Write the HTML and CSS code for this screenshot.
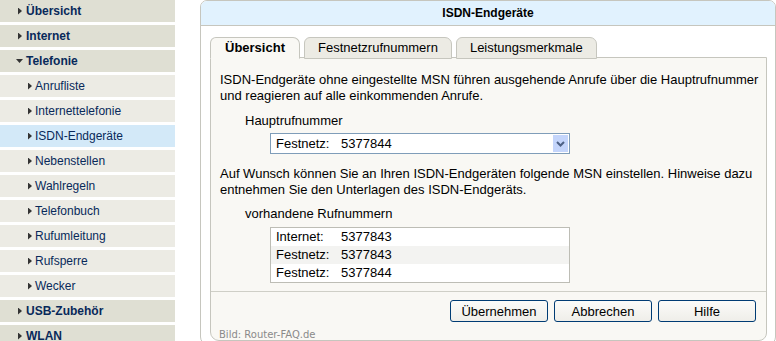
FILE: index.html
```html
<!DOCTYPE html>
<html lang="de">
<head>
    <meta charset="UTF-8">
    <title>ISDN-Endgeräte</title>
    <link rel="stylesheet" href="styles.css">
</head>
<body>
    <div class="page">
        <nav class="menu">
            <a class="menu-item top"><span class="arrow"></span>Übersicht</a>
            <a class="menu-item top"><span class="arrow"></span>Internet</a>
            <a class="menu-item top open"><span class="arrow down"></span>Telefonie</a>
            <a class="menu-item sub"><span class="arrow"></span>Anrufliste</a>
            <a class="menu-item sub"><span class="arrow"></span>Internettelefonie</a>
            <a class="menu-item sub active"><span class="arrow"></span>ISDN-Endgeräte</a>
            <a class="menu-item sub"><span class="arrow"></span>Nebenstellen</a>
            <a class="menu-item sub"><span class="arrow"></span>Wahlregeln</a>
            <a class="menu-item sub"><span class="arrow"></span>Telefonbuch</a>
            <a class="menu-item sub"><span class="arrow"></span>Rufumleitung</a>
            <a class="menu-item sub"><span class="arrow"></span>Rufsperre</a>
            <a class="menu-item sub"><span class="arrow"></span>Wecker</a>
            <a class="menu-item top"><span class="arrow"></span>USB-Zubehör</a>
            <a class="menu-item top"><span class="arrow"></span>WLAN</a>
        </nav>

        <div class="main">
            <div class="main-head">ISDN-Endgeräte</div>
            <div class="main-body">
                <div class="tabs">
                    <span class="tab active">Übersicht</span>
                    <span class="tab">Festnetzrufnummern</span>
                    <span class="tab">Leistungsmerkmale</span>
                </div>
                <div class="panel">
                    <div class="panel-content">
                        <p>ISDN-Endgeräte ohne eingestellte MSN führen ausgehende Anrufe über die Hauptrufnummer und reagieren auf alle einkommenden Anrufe.</p>

                        <div class="field-label first">Hauptrufnummer</div>
                        <div class="select">
                            <span class="num-label">Festnetz:</span><span>5377844</span>
                            <span class="select-btn">
                                <svg width="9" height="6" viewBox="0 0 9 6"><path d="M1 1 L4.5 4.5 L8 1" fill="none" stroke="#4d6185" stroke-width="2"/></svg>
                            </span>
                        </div>

                        <p class="second">Auf Wunsch können Sie an Ihren ISDN-Endgeräten folgende MSN einstellen. Hinweise dazu entnehmen Sie den Unterlagen des ISDN-Endgeräts.</p>

                        <div class="field-label">vorhandene Rufnummern</div>
                        <div class="list">
                            <div class="list-row"><span class="num-label">Internet:</span><span>5377843</span></div>
                            <div class="list-row alt"><span class="num-label">Festnetz:</span><span>5377843</span></div>
                            <div class="list-row"><span class="num-label">Festnetz:</span><span>5377844</span></div>
                        </div>
                    </div>
                    <div class="panel-buttons">
                        <button class="btn">Übernehmen</button>
                        <button class="btn">Abbrechen</button>
                        <button class="btn">Hilfe</button>
                    </div>
                    <div class="credit">Bild: Router-FAQ.de</div>
                </div>
            </div>
        </div>
    </div>
</body>
</html>
```

FILE: styles.css
```css
body {
    margin: 0;
    font-family: "Liberation Sans", Arial, sans-serif;
    font-size: 13px;
    color: #000;
    background-color: white;
    overflow: hidden;
}
.page {
    display: flex;
    align-items: flex-start;
    gap: 25px;
    height: 341px;
    overflow: hidden;
}

/* left menu */
.menu {
    width: 175px;
    display: flex;
    flex-direction: column;
    gap: 3px;
    flex-shrink: 0;
}
.menu-item {
    display: flex;
    align-items: center;
    height: 22px;
    color: #08295a;
    font-size: 12px;
    background-color: #ecebe4;
    padding-left: 28px;
    flex-shrink: 0;
}
.menu-item.top {
    background-color: #dfdfd3;
    font-weight: bold;
    padding-left: 18px;
}
.menu-item.active {
    background-color: #d3e9f8;
}
.arrow {
    width: 4px;
    height: 7px;
    background-color: #333;
    clip-path: polygon(0 0, 100% 50%, 0 100%);
    margin-right: 3px;
}
.menu-item.top .arrow {
    margin-right: 4px;
}
.menu-item.top .arrow.down {
    width: 7px;
    height: 4px;
    margin-left: -2px;
    margin-right: 3px;
    clip-path: polygon(0 0, 100% 0, 50% 100%);
}

/* main box */
.main {
    flex: 1;
    display: flex;
    flex-direction: column;
    border: 1px solid #c6c6be;
    border-radius: 7px 7px 8px 8px;
    overflow: hidden;
    height: 345px;
    flex-shrink: 0;
    box-sizing: border-box;
}
.main-head {
    height: 24px;
    line-height: 24px;
    background-color: #e1f2fe;
    border-bottom: 1px solid #c6c6be;
    text-align: center;
    font-weight: bold;
    font-size: 12px;
}
.main-body {
    flex: 1;
    display: flex;
    flex-direction: column;
    padding: 11px 8px 3px 9px;
}

.tabs {
    display: flex;
    gap: 4px;
    height: 21px;
}
.tab {
    height: 20px;
    line-height: 20px;
    padding: 0 13px;
    background-color: #ecebe4;
    border: 1px solid #c6c6be;
    border-radius: 6px 7px 0 0;
    position: relative;
    z-index: 1;
}
.tab.active {
    font-weight: bold;
    padding: 0 14px;
    background-color: #f9f8f4;
    border-bottom-color: #f9f8f4;
}

.panel {
    flex: 1;
    display: flex;
    flex-direction: column;
    position: relative;
    background-color: #f9f8f4;
    border: 1px solid #c6c6be;
    border-radius: 0 0 8px 9px;
    margin-top: -1px;
}
.panel-content {
    padding: 14px 0 8px 9px;
    line-height: 16px;
    border-bottom: 1px solid #cfcfc7;
}
.panel-content p {
    margin: 0;
}
.panel-content p.second {
    margin-top: 12px;
}
.field-label {
    margin: 8px 0 0 25px;
}
.field-label.first {
    margin-top: 9px;
}
.num-label {
    display: inline-block;
    width: 65px;
}
.select {
    display: flex;
    align-items: center;
    position: relative;
    margin: 4px 0 0 50px;
    width: 300px;
    height: 21px;
    box-sizing: border-box;
    border: 1px solid #7f9db9;
    background-color: white;
    padding-left: 5px;
}
.select-btn {
    position: absolute;
    right: 1px;
    top: 1px;
    width: 15px;
    height: 17px;
    background-color: #c4d5fb;
    display: flex;
    align-items: center;
    justify-content: center;
}
.list {
    margin: 5px 0 0 50px;
    width: 300px;
    height: 56px;
    box-sizing: border-box;
    border: 1px solid #bdbdb5;
    background-color: white;
}
.list-row {
    height: 18px;
    line-height: 18px;
    padding-left: 5px;
}
.list-row.alt {
    background-color: #f3f3f1;
}

.panel-buttons {
    display: flex;
    justify-content: flex-end;
    gap: 6px;
    padding: 8px 10px 0 0;
}
.btn {
    width: 98px;
    height: 22px;
    font-family: "Liberation Sans", Arial, sans-serif;
    font-size: 13px;
    color: #000;
    border: 1px solid #003c74;
    border-radius: 3px;
    background: linear-gradient(#fbfbf9, #efeee9);
    padding: 0;
}
/* watermark in the panel's lower left corner */
.credit {
    position: absolute;
    left: 8px;
    bottom: -1px;
    font-family: "DejaVu Sans", Verdana, sans-serif;
    font-size: 10px;
    line-height: 12px;
    color: #8a8a8a;
}
```
